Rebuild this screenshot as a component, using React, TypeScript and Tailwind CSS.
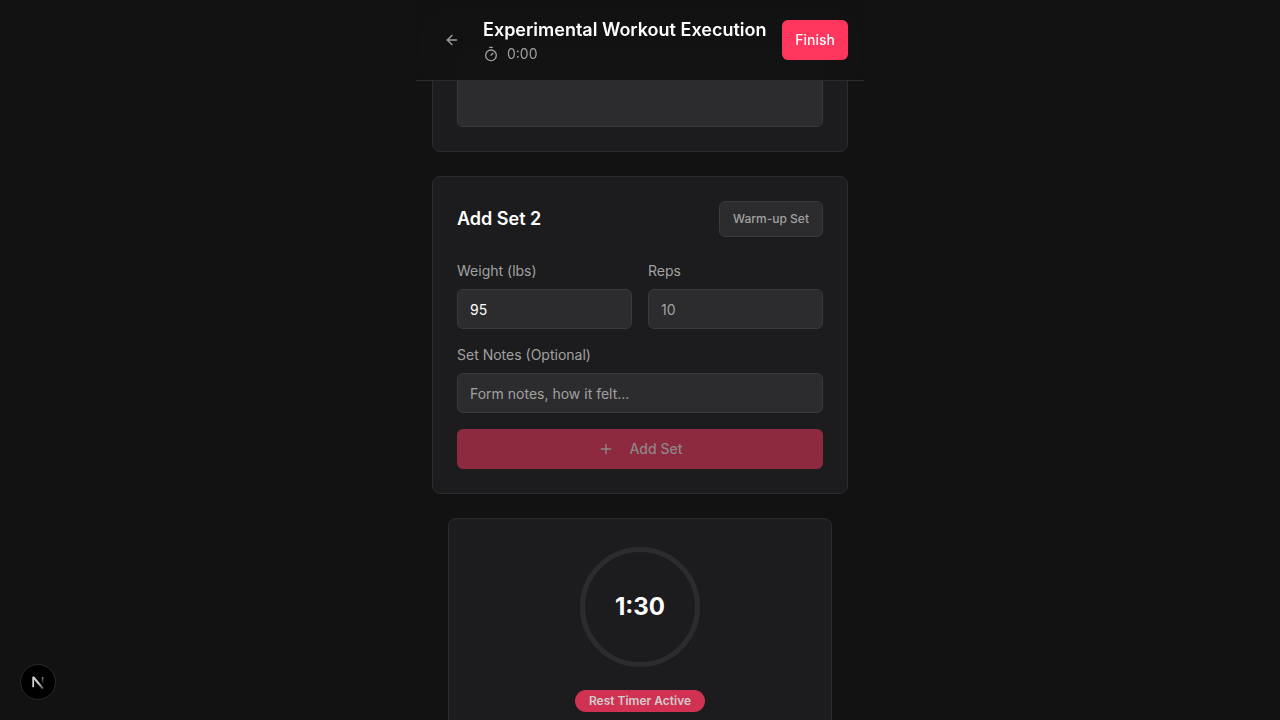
import { ArrowLeft, Plus, Timer } from "lucide-react";

const inputClass =
  "block h-10 w-full rounded-md border border-[#3a3a3c] bg-[#2c2c2e] px-3 text-sm text-white placeholder:text-[#a1a1a1] outline-none";

function Header() {
  return (
    <header className="relative z-10 flex items-center border-b border-[#2c2c2e] bg-[#121212]/95 px-4 py-4 backdrop-blur-sm">
      <button
        type="button"
        aria-label="Go back"
        className="mr-[11px] flex h-10 w-10 shrink-0 items-center justify-center text-[#a1a1a1]"
      >
        <ArrowLeft size={16} />
      </button>
      <div className="min-w-0 flex-1">
        <h1 className="text-lg leading-7 font-semibold whitespace-nowrap text-white">
          Experimental Workout Execution
        </h1>
        <div className="flex items-center gap-2 text-sm text-[#a1a1a1]">
          <Timer size={16} />
          <span>0:00</span>
        </div>
      </div>
      <button
        type="button"
        className="h-10 shrink-0 rounded-md bg-[#ff375f] px-[13px] text-sm font-medium text-white"
      >
        Finish
      </button>
    </header>
  );
}

function NotesCard() {
  return (
    <section className="rounded-lg border border-[#2c2c2e] bg-[#1c1c1e] p-6">
      <textarea
        aria-label="Exercise notes"
        className="block h-20 w-full resize-none rounded-md border border-[#3a3a3c] bg-[#2c2c2e] px-3 py-2 text-sm text-white outline-none"
      />
    </section>
  );
}

function AddSetCard() {
  return (
    <section className="rounded-lg border border-[#2c2c2e] bg-[#1c1c1e] p-6">
      <div className="flex items-center justify-between">
        <h2 className="text-lg font-semibold text-white">Add Set 2</h2>
        <button
          type="button"
          className="h-9 rounded-md border border-[#3a3a3c] bg-[#2c2c2e] px-[13px] text-xs font-medium text-[#a1a1a1]"
        >
          Warm-up Set
        </button>
      </div>
      <form className="mt-6 space-y-4">
        <div className="grid grid-cols-2 gap-4">
          <div>
            <label htmlFor="weight" className="mb-2 block text-sm text-[#a1a1a1]">
              Weight (lbs)
            </label>
            <input id="weight" inputMode="decimal" defaultValue="95" className={inputClass} />
          </div>
          <div>
            <label htmlFor="reps" className="mb-2 block text-sm text-[#a1a1a1]">
              Reps
            </label>
            <input id="reps" inputMode="numeric" placeholder="10" className={inputClass} />
          </div>
        </div>
        <div>
          <label htmlFor="set-notes" className="mb-2 block text-sm text-[#a1a1a1]">
            Set Notes (Optional)
          </label>
          <input id="set-notes" placeholder="Form notes, how it felt..." className={inputClass} />
        </div>
        <button
          type="button"
          disabled
          className="flex h-10 w-full items-center justify-center gap-4 rounded-md bg-[#8e2a3f] text-sm font-medium text-[#8f8588]"
        >
          <Plus size={16} />
          Add Set
        </button>
      </form>
    </section>
  );
}

function RestTimer() {
  return (
    <section className="mx-4 flex flex-col items-center rounded-lg border border-[#2c2c2e] bg-[#1c1c1e] px-6 pt-6 pb-8">
      <div className="grid h-32 w-32 place-items-center">
        <svg viewBox="0 0 128 128" className="col-start-1 row-start-1 h-32 w-32" aria-hidden="true">
          <circle cx="64" cy="64" r="57.5" fill="none" stroke="#2c2c2e" strokeWidth="5" />
        </svg>
        <span className="col-start-1 row-start-1 text-2xl font-bold text-white">1:30</span>
      </div>
      <span className="mt-[19px] rounded-full bg-[#d13253] px-[14px] py-[3px] text-xs font-semibold text-[#d0cccd]">
        Rest Timer Active
      </span>
    </section>
  );
}

function DevBadge() {
  return (
    <button
      type="button"
      aria-label="Open Next.js Dev Tools"
      className="fixed bottom-5 left-5 z-20 flex h-9 w-9 items-center justify-center rounded-full border border-[#2b2b2b] bg-black"
    >
      <svg width="16" height="16" viewBox="0 0 16 16" fill="none" aria-hidden="true">
        <defs>
          <linearGradient id="stem" x1="12" y1="3" x2="12" y2="10" gradientUnits="userSpaceOnUse">
            <stop stopColor="#8a8a8a" />
            <stop offset="1" stopColor="#8a8a8a" stopOpacity="0" />
          </linearGradient>
          <linearGradient id="slash" x1="9" y1="9" x2="14" y2="15" gradientUnits="userSpaceOnUse">
            <stop stopColor="#d0d0d0" />
            <stop offset="1" stopColor="#d0d0d0" stopOpacity="0.3" />
          </linearGradient>
        </defs>
        <path d="M3.2 13.2V2.8" stroke="#d0d0d0" strokeWidth="1.8" />
        <path d="M3.2 3L13 14.6" stroke="url(#slash)" strokeWidth="2" />
        <path d="M12.6 3V10" stroke="url(#stem)" strokeWidth="1.6" />
      </svg>
    </button>
  );
}

export default function App() {
  return (
    <div className="h-screen overflow-hidden bg-[#121212] font-[Inter,sans-serif]">
      <div className="mx-auto max-w-md">
        <Header />
        <main className="-mt-[59px] space-y-6 px-4 pb-6">
          <NotesCard />
          <AddSetCard />
          <RestTimer />
        </main>
      </div>
      <DevBadge />
    </div>
  );
}
